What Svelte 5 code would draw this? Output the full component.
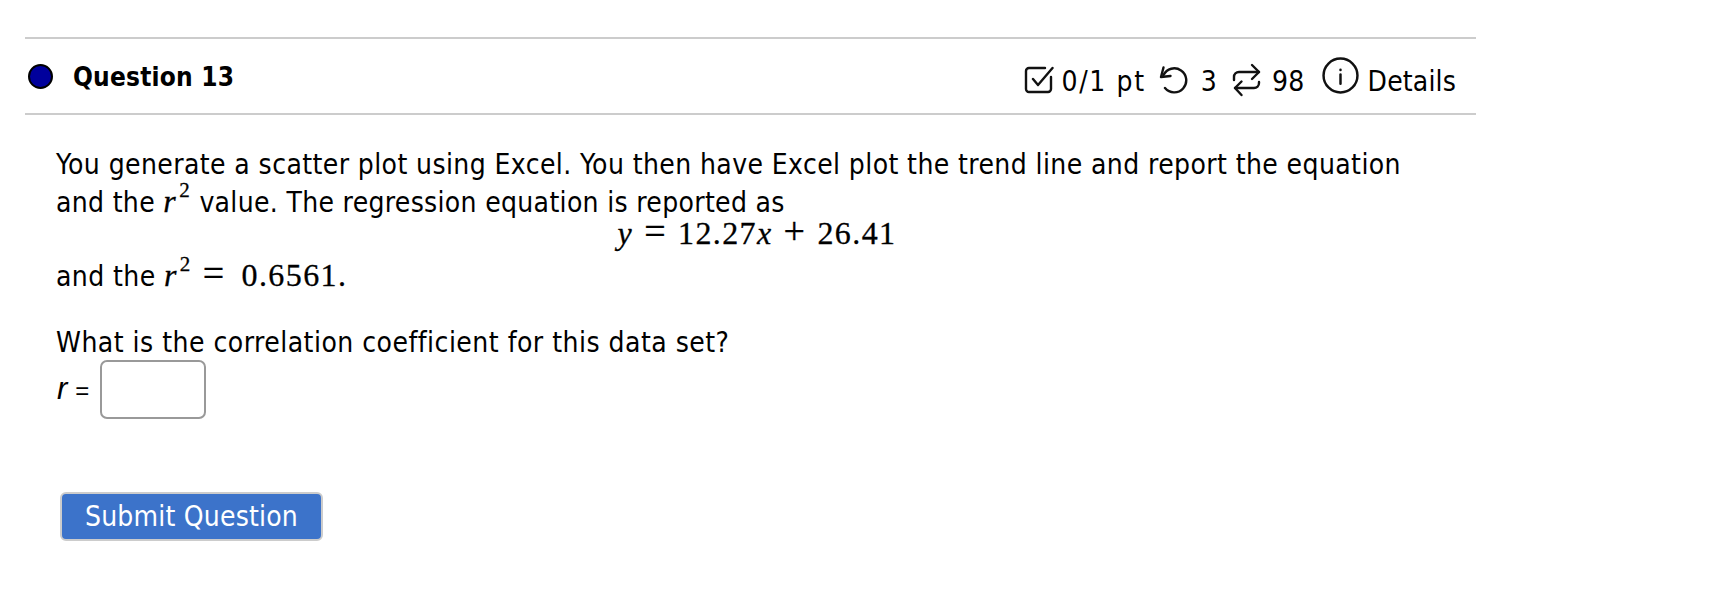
<script>
	let answer = '';
</script>

<div class="page">
	<div class="question">
		<header class="head">
			<div class="title">
				<span class="dot"></span>
				<h2>Question 13</h2>
			</div>
			<div class="meta">
				<svg class="ic" viewBox="0 0 30 29" width="30" height="29"><path d="M27 12V24a3 3 0 0 1-3 3H5a3 3 0 0 1-3-3V6a3 3 0 0 1 3-3H21" /><path d="M9 14L14 20L28.500 3" /></svg>
				<span class="m1">0/1 pt</span>
				<svg class="ic" viewBox="0 0 30 29" width="30" height="29"><path d="M5.500 10A12 12 0 1 1 7 23" /><path d="M5.500 2.500L3 12L12.500 11" /></svg>
				<span class="m2">3</span>
				<svg class="ic" viewBox="0 0 29 34" width="29" height="34"><path d="M2 17V14a5 5 0 0 1 5-5H27" /><path d="M20 2L27 9L20 16" /><path d="M27 19V20a5 5 0 0 1-5 5H3" /><path d="M9.500 18.500L3 25L9.500 32" /></svg>
				<span class="m3">98</span>
				<svg class="ic info" viewBox="0 0 36 36" width="37" height="37"><circle cx="18" cy="18" r="16.500" /><path d="M18 17v9" /><path d="M18 12.300v.4" /></svg>
				<span class="m4">Details</span>
			</div>
		</header>

		<div class="body">
			<p class="para">You generate a scatter plot using Excel. You then have Excel plot the trend line and report the equation<br /><span class="tight">and the <span class="math"><i>r</i><sup>2</sup></span> value. The regression equation is reported as</span></p>
			<div class="display math"><i>y</i><span class="op">=</span>12.27<i>x</i><span class="op">+</span>26.41</div>
			<p class="para after">and the <span class="math"><i>r</i><sup>2</sup><span class="op">=</span>0.6561.</span></p>
			<p class="para ask">What is the correlation coefficient for this data set?</p>
			<div class="answer">
				<span class="r"><i>r</i><span class="eq">=</span></span>
				<input type="text" bind:value={answer} />
			</div>
			<button class="submit">Submit Question</button>
		</div>
	</div>
</div>

<style>
	:global(body) {
		background: #fff;
		margin: 0;
	}

	.page {
		width: 1712px;
		height: 614px;
		padding: 37px 0 0 25px;
		box-sizing: border-box;
		font-family: 'DejaVu Sans', sans-serif;
		font-stretch: condensed;
		color: #000;
		overflow: hidden;
	}

	.question {
		width: 1451px;
	}

	.head {
		display: flex;
		justify-content: space-between;
		align-items: center;
		height: 74px;
		border-top: 2px solid #ccc;
		border-bottom: 2px solid #ccc;
		padding: 0 20px 0 3px;
	}

	.title {
		display: flex;
		align-items: center;
		gap: 20px;
	}

	.dot {
		width: 21px;
		height: 21px;
		border-radius: 50%;
		background: #00009c;
		border: 2px solid #000;
	}

	h2 {
		margin: 2px 0 0;
		font-size: 26px;
		font-weight: 700;
		letter-spacing: 0.2px;
	}

	.meta {
		display: flex;
		align-items: center;
		font-size: 28px;
		letter-spacing: 0.3px;
	}

	.meta span {
		margin-top: 10px;
	}

	.ic {
		fill: none;
		stroke: #111;
		stroke-width: 2.4;
		stroke-linecap: round;
		stroke-linejoin: round;
		margin-top: 7px;
	}

	.m1 {
		margin: 0 12px 0 8px;
		letter-spacing: 1.6px;
	}

	.m2 {
		margin: 0 15px 0 13px;
	}

	.m3 {
		margin: 0 17px 0 11px;
	}

	.m4 {
		margin-left: 9px;
		letter-spacing: 0.15px;
	}

	.ic.info {
		margin-top: -1px;
	}

	.body {
		padding: 31px 0 0 31px;
		font-size: 28px;
		letter-spacing: 0.4px;
		line-height: 38px;
	}

	.para {
		margin: 0;
	}

	.tight {
		letter-spacing: 0.32px;
	}

	.math {
		font-family: 'Liberation Serif', serif;
		font-stretch: normal;
		font-size: 32px;
		letter-spacing: 1.4px;
		line-height: 0;
		-webkit-text-stroke: 0.3px #000;
	}

	.math sup {
		font-size: 21px;
		line-height: 0;
		margin-left: 2px;
		vertical-align: 15px;
	}

	.op {
		font-size: 38px;
		margin: 0 11px;
	}

	.display {
		text-align: center;
		line-height: 28px;
		margin-top: -5px;
		padding-right: 18px;
	}

	.after {
		margin-top: 11px;
	}

	.after .op {
		margin-right: 16px;
	}

	.ask {
		margin-top: 28px;
		letter-spacing: 0.48px;
	}

	.answer {
		display: flex;
		align-items: center;
		gap: 11px;
		margin-top: -2px;
	}

	.r {
		font-family: 'Liberation Sans', sans-serif;
		font-size: 31px;
		font-stretch: normal;
		letter-spacing: 0;
		padding-left: 1px;
	}

	.eq {
		font-size: 24px;
		margin-left: 8px;
	}

	input {
		width: 106px;
		height: 59px;
		box-sizing: border-box;
		border: 2px solid #999;
		border-radius: 7px;
		background: #fff;
		padding: 0;
	}

	.submit {
		display: block;
		margin: 73px 0 0 4px;
		width: 263px;
		height: 49px;
		background: #3c73ca;
		color: #fff;
		border: 2px solid #ccc;
		border-radius: 6px;
		font-family: inherit;
		font-stretch: inherit;
		font-size: 28px;
		letter-spacing: 0.2px;
		padding: 0;
	}
</style>
